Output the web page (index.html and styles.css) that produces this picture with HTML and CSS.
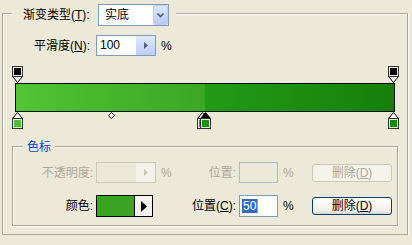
FILE: index.html
```html
<!DOCTYPE html>
<html lang="zh-CN">
<head>
    <meta charset="UTF-8">
    <title>渐变编辑器</title>
    <link rel="stylesheet" href="styles.css">
</head>
<body>
    <div class="panel outer">
        <!-- Gradient type header sits over the group border -->
        <div class="head">
            <label class="lbl head-lbl">渐变类型(<u>T</u>):</label>
            <div class="select">
                <span class="select-text">实底</span>
                <span class="drop">
                    <svg width="7" height="5" viewBox="0 0 7 5"><path d="M0.5 0.5 L3.5 3.5 L6.5 0.5" fill="none" stroke="#4d6185" stroke-width="1.6"/></svg>
                </span>
            </div>
        </div>

        <!-- Smoothness -->
        <div class="smooth-row">
            <label class="lbl smooth-lbl">平滑度(<u>N</u>):</label>
            <div class="field spin">
                <span class="field-text">100</span>
                <span class="spin-btn">
                    <svg width="4" height="7" viewBox="0 0 4 7"><path d="M0 0 L4 3.5 L0 7 Z" fill="#4d6185"/></svg>
                </span>
            </div>
            <span class="unit">%</span>
        </div>

        <!-- Gradient ramp with stops -->
        <div class="ramp">
            <div class="lane">
                <svg class="stop" style="left:0%" width="11" height="17" viewBox="0 0 11 17">
                    <path d="M0.5 10.5 L5.5 16.5 L10.5 10.5" fill="#fff" stroke="#000"/>
                    <rect x="0.5" y="0.5" width="10" height="10" fill="#e8e8e8" stroke="#333"/>
                    <rect x="2" y="2" width="7" height="7" fill="#000"/>
                </svg>
                <svg class="stop" style="left:100%" width="11" height="17" viewBox="0 0 11 17">
                    <path d="M0.5 10.5 L5.5 16.5 L10.5 10.5" fill="#fff" stroke="#000"/>
                    <rect x="0.5" y="0.5" width="10" height="10" fill="#e8e8e8" stroke="#333"/>
                    <rect x="2" y="2" width="7" height="7" fill="#000"/>
                </svg>
            </div>
            <div class="bar"></div>
            <div class="lane">
                <svg class="stop" style="left:0%" width="11" height="17" viewBox="0 0 11 17">
                    <path d="M0.5 6.5 L5.5 0.5 L10.5 6.5" fill="#fff" stroke="#000"/>
                    <rect x="0.5" y="6.5" width="10" height="10" fill="#e8e8e8" stroke="#333"/>
                    <rect x="2" y="8" width="7" height="7" fill="#4dbd3a"/>
                </svg>
                <svg class="mid" style="left:25%" width="7" height="7" viewBox="0 0 7 7">
                    <path d="M3.5 0.5 L6.5 3.5 L3.5 6.5 L0.5 3.5 Z" fill="#fff" stroke="#000"/>
                </svg>
                <svg class="stop" style="left:49.3%" width="11" height="17" viewBox="0 0 11 17">
                    <path d="M0.5 6.5 L5.5 0.5 L10.5 6.5" fill="#fff" stroke="#000"/>
                    <rect x="0.5" y="6.5" width="10" height="10" fill="#e8e8e8" stroke="#333"/>
                    <rect x="2" y="8" width="7" height="7" fill="#3aa321"/>
                </svg>
                <svg class="stop" style="left:50%" width="11" height="17" viewBox="0 0 11 17">
                    <path d="M0.5 6.5 L5.5 0.5 L10.5 6.5" fill="#000" stroke="#000"/>
                    <rect x="0.5" y="6.5" width="10" height="10" fill="#e8e8e8" stroke="#333"/>
                    <rect x="2" y="8" width="7" height="7" fill="#1b930f"/>
                </svg>
                <svg class="stop" style="left:100%" width="11" height="17" viewBox="0 0 11 17">
                    <path d="M0.5 6.5 L5.5 0.5 L10.5 6.5" fill="#fff" stroke="#000"/>
                    <rect x="0.5" y="6.5" width="10" height="10" fill="#e8e8e8" stroke="#333"/>
                    <rect x="2" y="8" width="7" height="7" fill="#178a0c"/>
                </svg>
            </div>
        </div>

        <!-- Stops group -->
        <div class="panel inner">
            <div class="title">色标</div>
            <div class="stop-grid">
                <label class="lbl right off">不透明度:</label>
                <div class="field spin disabled">
                    <span class="field-text"></span>
                    <span class="spin-btn">
                        <svg width="4" height="7" viewBox="0 0 4 7"><path d="M0 0 L4 3.5 L0 7 Z" fill="#c8c5b6"/></svg>
                    </span>
                </div>
                <span class="unit off">%</span>
                <label class="lbl right off">位置:</label>
                <div class="field pos disabled"></div>
                <span class="unit off">%</span>
                <button class="btn" disabled>删除(<u>D</u>)</button>

                <label class="lbl right">颜色:</label>
                <div class="swatch">
                    <span class="swatch-color"></span>
                    <span class="swatch-arrow">
                        <svg width="6" height="11" viewBox="0 0 6 11"><path d="M0 0 L6 5.5 L0 11 Z" fill="#000"/></svg>
                    </span>
                </div>
                <span class="unit"></span>
                <label class="lbl right">位置(<u>C</u>):</label>
                <div class="field pos"><span class="sel">50</span><span class="caret"></span></div>
                <span class="unit">%</span>
                <button class="btn active">删除(<u>D</u>)</button>
            </div>
        </div>
    </div>
</body>
</html>
```

FILE: styles.css
```css
body {
    margin: 0;
    background: #ece9d8;
    font-family: "Liberation Sans", "Noto Sans CJK SC", sans-serif;
    font-size: 12px;
    color: #000;
}

u {
    text-decoration: underline;
    text-underline-offset: 1px;
}

/* etched group box */
.panel {
    border: 1px solid #aca899;
    box-shadow: inset 1px 1px #fff, 1px 1px #fff;
}

.outer {
    margin: 13px 4px 0 2px;
    height: 222px;
    box-sizing: border-box;
}

.head {
    display: flex;
    align-items: center;
    width: fit-content;
    height: 22px;
    margin: -10px 0 0 9px;
    padding: 0 7px 0 11px;
    background: #ece9d8;
}

.lbl {
    line-height: 14px;
    white-space: nowrap;
}

.head-lbl {
    width: 72px;
}

.smooth-lbl {
    width: 59px;
}

.select {
    display: flex;
    justify-content: space-between;
    align-items: stretch;
    box-sizing: border-box;
    width: 71px;
    height: 22px;
    margin-left: 3px;
    border: 1px solid #7f9db9;
    background: #fff;
}

.select-text {
    padding-left: 6px;
    line-height: 20px;
}

.drop {
    display: flex;
    align-items: center;
    justify-content: center;
    box-sizing: border-box;
    width: 15px;
    border: 1px solid #bccdf6;
    border-radius: 2px;
    background: linear-gradient(to bottom, #dde7fd, #b8caf5);
}

.smooth-row {
    display: flex;
    align-items: center;
    margin: 9px 0 0 31px;
    height: 21px;
}

.field {
    box-sizing: border-box;
    height: 21px;
    border: 1px solid #7f9db9;
    background: #fff;
}

.spin {
    display: flex;
    width: 60px;
    margin-left: 3px;
}

.field-text {
    flex: 1;
    padding-left: 3px;
    line-height: 19px;
}

.spin-btn {
    display: flex;
    align-items: center;
    justify-content: center;
    width: 19px;
    background: linear-gradient(to bottom, #dfe8fd, #bccdf6);
}

.unit {
    padding-left: 5px;
    line-height: 14px;
}

/* gradient ramp */
.ramp {
    width: 380px;
    margin: 10px 0 0 12px;
}

.lane {
    position: relative;
    height: 17px;
    margin: 0 2px;
}

.stop {
    position: absolute;
    top: 0;
    margin-left: -5px;
}

.mid {
    position: absolute;
    top: 0;
    margin-left: -3px;
}

.bar {
    box-sizing: border-box;
    height: 29px;
    border: 1px solid #000;
    background: linear-gradient(to right, #50c535 0%, #3ca625 50%, #229b18 50%, #167f0a 100%);
}

/* stops group */
.inner {
    margin: 17px 9px 0 9px;
    padding-bottom: 8px;
}

.title {
    width: fit-content;
    margin: -7px 0 0 10px;
    padding: 0 4px;
    height: 14px;
    line-height: 14px;
    background: #ece9d8;
    color: #0046d5;
}

.stop-grid {
    display: grid;
    grid-template-columns: 83px 60px 30px 53px 39px 34px 80px;
    grid-template-rows: 21px 22px;
    row-gap: 12px;
    align-items: center;
    margin-top: 8px;
}

.right {
    text-align: right;
    padding-right: 3px;
}

.stop-grid .spin {
    margin-left: 0;
}

.off {
    color: #aca899;
}

.disabled {
    border-color: #cbc8b9;
    background: #ece9d8;
}

.disabled .spin-btn {
    background: #f3f2ea;
}

.pos {
    width: 39px;
    display: flex;
    align-items: center;
    padding-left: 2px;
}

.pos.disabled {
    border-color: #a7bbd1;
}

.stop-grid .pos {
    height: 21px;
}

.stop-grid .pos:not(.disabled) {
    height: 22px;
}

.sel {
    background: #316ac5;
    color: #fff;
    line-height: 14px;
    padding: 0 1px;
}

.caret {
    width: 1px;
    height: 14px;
    background: #e89a2c;
}

.unit:empty {
    padding: 0;
}

.btn {
    box-sizing: border-box;
    width: 80px;
    height: 18px;
    padding: 0;
    font: inherit;
    line-height: 14px;
    border: 1px solid #cbc7b8;
    border-radius: 3px;
    background: #f5f4ea;
    color: #aca899;
}

.btn.active {
    border-color: #003c74;
    color: #000;
    background: linear-gradient(to bottom, #fff, #f0f0ea 80%, #d8d2c6);
}

.swatch {
    display: flex;
    box-sizing: border-box;
    width: 57px;
    height: 22px;
    border: 1px solid #000;
}

.swatch-color {
    width: 37px;
    background: #3aa321;
    border-right: 1px solid #000;
}

.swatch-arrow {
    flex: 1;
    display: flex;
    align-items: center;
    justify-content: center;
    background: #f4f3ee;
}
```
